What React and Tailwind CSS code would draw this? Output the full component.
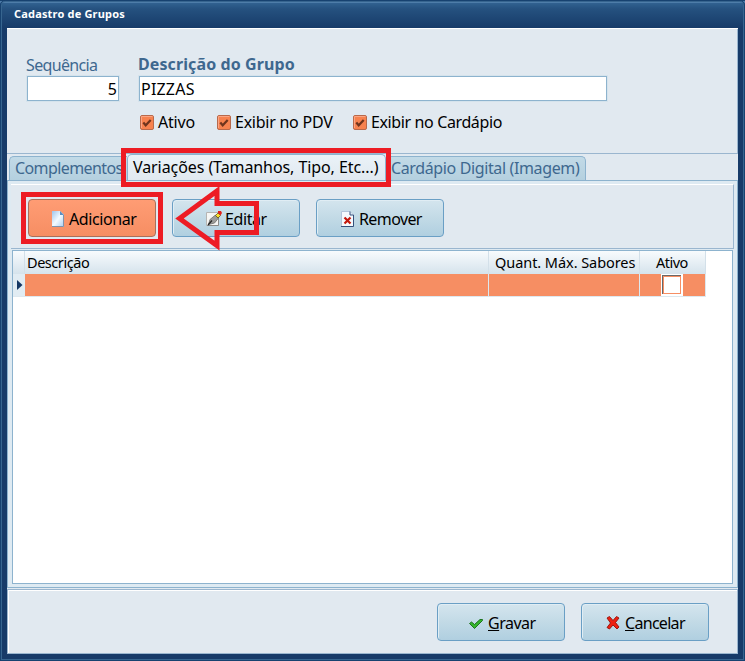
import React, { useState } from 'react';
import clsx from 'clsx';

function PageIcon({ children }) {
  return (
    <svg width="16" height="16" viewBox="0 0 16 16" className="shrink-0">
      <defs>
        <linearGradient id="sheet" x1="0" y1="0" x2="1" y2="1">
          <stop offset="0" stopColor="#9cc4ee" />
          <stop offset="0.5" stopColor="#f4faff" />
          <stop offset="1" stopColor="#a8cdf0" />
        </linearGradient>
      </defs>
      {children}
    </svg>
  );
}

function AddIcon() {
  return (
    <PageIcon>
      <path d="M2 0h8l4 4v12H2z" fill="url(#sheet)" />
      <path d="M13.500 4v11.500H2" fill="none" stroke="#7f93ad" />
      <path d="M10 0v4h4z" fill="#5b8fc4" />
    </PageIcon>
  );
}

function EditIcon() {
  return (
    <PageIcon>
      <path d="M.5 1.500h12v13H.5z" fill="#f6f6f4" stroke="#b5b5b3" />
      <path d="M12.500 6v8.500H1" fill="none" stroke="#8a8a88" />
      <path d="M2.500 13.500l1.500-5 5.500-4.500 3 3-4 5z" fill="#9d9d9b" stroke="#6d6d6b" strokeWidth=".8" />
      <path d="M2 14l4-4.500" stroke="#222" strokeWidth="1.200" />
      <path d="M9.500 4.500l2.500-2.500 2.500 2.500-2.500 2.500z" fill="#f8e02c" stroke="#4c4515" strokeWidth=".7" />
      <path d="M12 0h3l1 2-1.500 2.500L12 2z" fill="#e3201b" />
    </PageIcon>
  );
}

function RemoveIcon() {
  return (
    <PageIcon>
      <path d="M1.500.500h8.500l3.500 3.500v11.500h-12z" fill="#f5f9fd" stroke="#b3c4da" />
      <path d="M13.500 4v11.500H1" fill="none" stroke="#34517c" />
      <path d="M10 .5V4h3.500" fill="#dfeaf5" stroke="#34517c" />
      <path d="M4.500 6.500l6 6M10.500 6.500l-6 6" stroke="#c4170c" strokeWidth="2.200" />
    </PageIcon>
  );
}

function SaveIcon() {
  return (
    <svg width="16" height="16" viewBox="0 0 16 16" className="shrink-0">
      <path d="M1.500 8.500l2-1.500 3 2.500 5.500-5h2.500v1l-8 8z" fill="#35b52c" stroke="#126a13" strokeWidth=".9" />
    </svg>
  );
}

function CancelIcon() {
  return (
    <svg width="16" height="16" viewBox="0 0 16 16" className="shrink-0">
      <path
        d="M2 3l2.500-1.500 3.500 4 3.500-4L14 3l-3.500 4.500L14 12l-2 2-4-4-3.500 4-2.500-1.500 3.500-4.500z"
        fill="#ee2011"
        stroke="#941008"
        strokeWidth=".9"
      />
    </svg>
  );
}

function ToolButton({ icon, active, children, className, ...rest }) {
  return (
    <button
      type="button"
      className={clsx(
        'flex h-[38px] w-[128px] items-center rounded-[4px] border pt-px whitespace-nowrap',
        active
          ? 'border-[#a8705c] bg-linear-to-b from-[#ff9c74] to-[#f68e63]'
          : 'border-[#6a9fc5] bg-linear-to-b from-[#d4e5ee] via-[#c2dae6] to-[#b0cfe0] shadow-[inset_1px_1px_0_#e0edf4]',
        className
      )}
      {...rest}
    >
      {icon}
      {children}
    </button>
  );
}

function CheckOption({ label, className, checked, onChange }) {
  return (
    <label className={clsx('flex h-5 items-center gap-[4px] whitespace-nowrap', className)}>
      <input type="checkbox" className="sr-only" checked={checked} onChange={onChange} />
      <svg width="14" height="15" viewBox="0 0 14 15" className="shrink-0">
        <rect x=".5" y=".5" width="13" height="14" rx="1.500" fill="#f7824f" stroke="#b8694b" />
        <path d="M1.500 13V1.500h11" fill="none" stroke="#fba583" />
        {checked && <path d="M3.300 7.500l2.400 2.800 5-5.300" fill="none" stroke="#70341d" strokeWidth="2.200" />}
      </svg>
      <span>{label}</span>
    </label>
  );
}

export default function App() {
  const [flags, setFlags] = useState({ ativo: true, pdv: true, cardapio: true });
  const toggle = (key) => () => setFlags({ ...flags, [key]: !flags[key] });

  return (
    <div className="relative flex h-[661px] w-[745px] flex-col overflow-hidden bg-[#173b69] font-['Noto_Sans',sans-serif] text-[16px] leading-5 text-black">
      {/* Title bar */}
      <div className="flex h-[28px] shrink-0 items-center border-t border-[#174270] bg-linear-to-b from-[#356796] via-[#25517f] via-30% to-[#173b69] pb-[2px] pl-[14px] shadow-[inset_0_2px_0_#4e7da9]">
        <span className="text-[11px] font-bold tracking-[0.18px] text-white">Cadastro de Grupos</span>
      </div>

      <div className="mr-[7px] ml-[7px] flex h-[626px] flex-col border-t border-white bg-[#e1e9f0]">
        {/* Group data */}
        <div className="h-[125px] shrink-0 border-r border-b border-[#9ab6cf] pt-[25px] pl-[19px]">
          <div className="flex">
            <div className="w-[112px] text-[#3e688f]">
              <div className="h-[22px] pt-px tracking-[-0.65px]">Sequência</div>
              <input
                readOnly
                value="5"
                className="ml-px block h-[25px] w-[92px] border border-[#8db3ce] bg-white pr-px text-right text-black shadow-[0_0_0_1px_#d5e3ec] outline-none"
              />
            </div>
            <div>
              <div className="h-[22px] font-bold tracking-[0.1px] text-[#3e688f]">Descrição do Grupo</div>
              <input
                readOnly
                value="PIZZAS"
                className="ml-px block h-[25px] w-[468px] border border-[#8db3ce] bg-white pl-px tracking-[0.2px] shadow-[0_0_0_1px_#d5e3ec] outline-none"
              />
            </div>
          </div>
          <div className="mt-[11px] flex pl-[114px]">
            <CheckOption label="Ativo" className="w-[77px] tracking-[-0.2px]" checked={flags.ativo} onChange={toggle('ativo')} />
            <CheckOption label="Exibir no PDV" className="w-[136px] tracking-[-0.25px]" checked={flags.pdv} onChange={toggle('pdv')} />
            <CheckOption label="Exibir no Cardápio" className="tracking-[-0.38px]" checked={flags.cardapio} onChange={toggle('cardapio')} />
          </div>
        </div>

        {/* Tabs */}
        <div className="flex h-[26px] shrink-0 items-end pl-[2px] whitespace-nowrap text-[#3e688f]">
          <div className="h-[24px] w-[118px] rounded-tl-[5px] border-t border-l border-[#8db3ce] bg-linear-to-b from-[#c2dae7] to-[#b4d0df] pt-px pl-[5px] tracking-[-0.6px]">
            Complementos
          </div>
          <div className="h-[26px] w-[259px] rounded-t-[5px] border-x border-t border-[#8db3ce] bg-linear-to-b from-[#eaf2f8] to-[#e1e9f0] pt-[2px] pl-[5px] tracking-[-0.08px] text-black">
            Variações (Tamanhos, Tipo, Etc...)
          </div>
          <div className="h-[24px] w-[200px] rounded-tr-[5px] border-t border-r border-[#8db3ce] bg-linear-to-b from-[#c2dae7] to-[#b4d0df] pt-px pl-[5px] tracking-[-0.37px]">
            Cardápio Digital (Imagem)
          </div>
        </div>

        {/* Tab page */}
        <div className="flex h-[408px] shrink-0 flex-col border border-[#8db3ce] bg-[#deeaf2] px-[3px]">
          <div className="mt-[3px] flex h-[65px] shrink-0 gap-[16px] border-t border-r border-b border-t-white border-r-[#9ab6cf] border-b-[#9ab6cf] bg-[#e1e9f0] pt-[14px] pl-[17px]">
            <ToolButton active icon={<AddIcon />} className="gap-[3px] pl-[21px] tracking-[-0.4px]">Adicionar</ToolButton>
            <ToolButton icon={<EditIcon />} className="gap-[3px] pl-[33px] tracking-[-0.4px]">Editar</ToolButton>
            <ToolButton icon={<RemoveIcon />} className="gap-[3px] pl-[23px] tracking-[-0.6px]">Remover</ToolButton>
          </div>

          <div className="mt-px mr-px ml-px h-[334px] border border-[#8db3ce] bg-white">
            <div className="grid h-[23px] w-[693px] grid-cols-[12px_464px_151px_66px] bg-linear-to-b from-[#f8fbfd] to-[#d5e3ec] text-[14.500px] leading-[23px] whitespace-nowrap">
              <div className="border-r border-[#d3e0e9]" />
              <div className="border-r border-[#d3e0e9] pl-[2px] tracking-[-0.45px]">Descrição</div>
              <div className="border-r border-[#d3e0e9] pl-[6px] tracking-[-0.06px]">Quant. Máx. Sabores</div>
              <div className="border-r border-[#d3e0e9] pl-[16px] tracking-[-0.5px]">Ativo</div>
            </div>
            <div className="grid h-[23px] w-[693px] grid-cols-[12px_464px_151px_66px] border-b border-[#dde8ef] bg-[#f68e63]">
              <div className="flex items-center bg-[#e1ecf3] pl-[4px]">
                <svg width="6" height="10" viewBox="0 0 6 10">
                  <path d="M0 0l5.500 5L0 10z" fill="#153764" />
                </svg>
              </div>
              <div className="border-r border-[#dde8ef]" />
              <div className="border-r border-[#dde8ef]" />
              <div className="border-r border-[#dde8ef] pl-[21px]">
                <div className="h-[22px] w-[22px] bg-white pt-px pl-px">
                  <div className="h-[19px] w-[19px] border-t border-l border-[#696969] bg-white shadow-[inset_1px_1px_0_#f68e63,inset_-1px_-1px_0_#f68e63]" />
                </div>
              </div>
            </div>
          </div>
        </div>

        {/* Footer */}
        <div className="mt-px flex h-[65px] shrink-0 justify-end gap-[16px] border border-[#9ab6cf] pt-[13px] pr-[28px] shadow-[inset_1px_1px_0_#fff]">
          <ToolButton icon={<SaveIcon />} className="gap-[4px] pl-[30px] tracking-[-0.5px]">
            <span><span className="underline">G</span>ravar</span>
          </ToolButton>
          <ToolButton icon={<CancelIcon />} className="gap-[4px] pl-[23px] tracking-[-0.7px]">
            <span><span className="underline">C</span>ancelar</span>
          </ToolButton>
        </div>
      </div>

      {/* Window frame */}
      <div className="pointer-events-none absolute inset-0 rounded-t-[5px] border border-[#174270] shadow-[inset_0_0_0_1px_#37658f]" />

      {/* Callouts */}
      <div className="pointer-events-none absolute top-[148px] left-[121px] h-[39px] w-[270px] border-[5px] border-[#ed1c24]" />
      <div className="pointer-events-none absolute top-[192px] left-[21px] h-[52px] w-[142px] border-[5px] border-[#ed1c24]" />
      <svg className="pointer-events-none absolute top-[184px] left-[172px]" width="92" height="68" viewBox="172 184 92 68">
        <path d="M179.500 218.500L217 191v12.500h39.500v29H217v13z" fill="none" stroke="#ed1c24" strokeWidth="5" />
      </svg>
    </div>
  );
}
